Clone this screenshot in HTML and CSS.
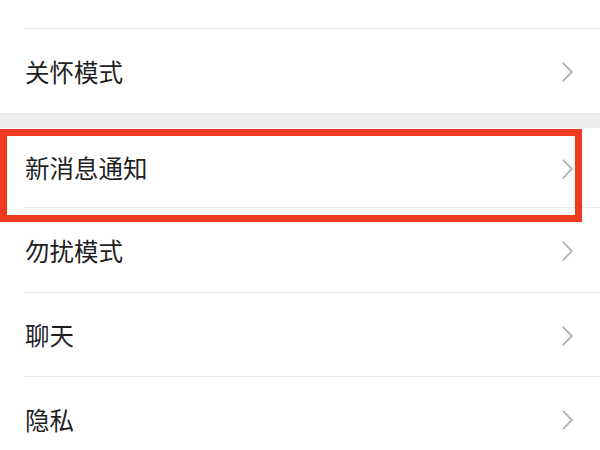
FILE: index.html
```html
<!DOCTYPE html>
<html lang="zh-CN">
<head>
<meta charset="utf-8">
<title>设置</title>
<link rel="stylesheet" href="styles.css">
</head>
<body>
<div class="page">
  <div class="group">
    <div class="cell cell-top"></div>
    <div class="cell cell-first cell-last">
      <span class="label">关怀模式</span>
      <svg class="chev" viewBox="0 0 11 20" width="11" height="20"><polyline points="1.2,1.2 9.8,10 1.2,18.8"/></svg>
    </div>
  </div>
  <div class="band"></div>
  <div class="group group-2">
    <div class="cell cell-notify">
      <span class="label">新消息通知</span>
      <svg class="chev" viewBox="0 0 11 20" width="11" height="20"><polyline points="1.2,1.2 9.8,10 1.2,18.8"/></svg>
    </div>
    <div class="cell cell-mid">
      <span class="label">勿扰模式</span>
      <svg class="chev" viewBox="0 0 11 20" width="11" height="20"><polyline points="1.2,1.2 9.8,10 1.2,18.8"/></svg>
    </div>
    <div class="cell cell-chat">
      <span class="label">聊天</span>
      <svg class="chev" viewBox="0 0 11 20" width="11" height="20"><polyline points="1.2,1.2 9.8,10 1.2,18.8"/></svg>
    </div>
    <div class="cell cell-last">
      <span class="label">隐私</span>
      <svg class="chev" viewBox="0 0 11 20" width="11" height="20"><polyline points="1.2,1.2 9.8,10 1.2,18.8"/></svg>
    </div>
    <div class="highlight"></div>
  </div>
</div>
</body>
</html>
```

FILE: styles.css
```css
html, body {
  margin: 0;
  padding: 0;
  background: #ffffff;
}

.page {
  width: 600px;
  height: 450px;
  overflow: hidden;
  background: #ffffff;
  font-family: "Noto Sans CJK SC", "Noto Sans", sans-serif;
  color: #1f1f1f;
}

.group {
  position: relative;
  background: #ffffff;
}

.cell {
  display: flex;
  align-items: center;
  justify-content: space-between;
  margin-left: 24px;
  padding: 2px 27px 0 1px;
  box-sizing: border-box;
  border-bottom: 1px solid #ededed;
}

.cell-top {
  height: 29px;
  padding: 0;
}

.cell-first {
  height: 84px;
}

.cell-notify {
  height: 80px;
}

.cell-mid {
  height: 85px;
}

.cell-chat {
  height: 84px;
}

.cell-last {
  height: 84px;
  border-bottom: none;
}

.label {
  font-size: 24.5px;
  line-height: 1;
  letter-spacing: 0;
}

.chev {
  display: block;
  flex: none;
}

.chev polyline {
  fill: none;
  stroke: #b4b4b4;
  stroke-width: 1.8;
  stroke-linecap: round;
  stroke-linejoin: round;
}

.band {
  height: 15px;
  background: #ededed;
}

.highlight {
  position: absolute;
  left: 0;
  top: 1px;
  width: 582px;
  height: 93px;
  box-sizing: border-box;
  border: 7px solid #ee3a1f;
  pointer-events: none;
}
```
